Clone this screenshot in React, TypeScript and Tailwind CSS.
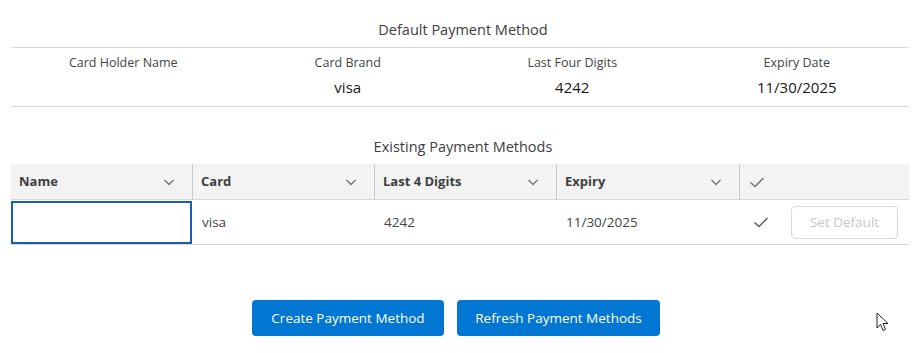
import React from "react";

const Chevron = () => (
  <svg width="14" height="14" viewBox="0 0 14 14" fill="none" stroke="#747474" strokeWidth="1.3">
    <path d="M2.5 5 L7 9.5 L11.5 5" />
  </svg>
);

const Check = ({ color = "#5c5c5c" }: { color?: string }) => (
  <svg width="16" height="14" viewBox="0 0 16 14" fill="none" stroke={color} strokeWidth="1.5">
    <path d="M1.5 7.5 L6 11.5 L14.5 3" />
  </svg>
);

export default function App() {
  const font = { fontFamily: '"Open Sans", "Noto Sans", sans-serif' };
  return (
    <div className="relative w-[923px] h-[353px] bg-white text-[#181818]" style={font}>
      <div className="px-[11px] pt-[20px] w-[920px]">
        <div className="text-center text-[14.5px] text-[#3e3e3e] leading-[20px] pb-[7px] pl-[6px] border-b border-[#d8d8d8]">
          Default Payment Method
        </div>
        <div className="grid grid-cols-4 border-b border-[#d8d8d8] pt-[6px] pb-[8px]">
          {[
            ["Card Holder Name", ""],
            ["Card Brand", "visa"],
            ["Last Four Digits", "4242"],
            ["Expiry Date", "11/30/2025"],
          ].map(([l, v]) => (
            <div key={l} className="flex flex-col items-center">
              <div className="text-[12.5px] leading-[18px] text-[#444]">{l}</div>
              <div className="text-[15px] leading-[22px] text-[#181818] mt-[4px] h-[22px]">{v}</div>
            </div>
          ))}
        </div>
        <div className="text-center text-[14.5px] text-[#3e3e3e] leading-[20px] mt-[30px] mb-[7px] pl-[6px]">
          Existing Payment Methods
        </div>
        <div className="grid grid-cols-[181px_182px_182px_183px_170px]">
          {["Name", "Card", "Last 4 Digits", "Expiry"].map((h, i) => (
            <div
              key={h}
              className={`h-[36px] bg-[#f3f3f3] border-b border-[#d8d8d8] flex items-center justify-between pl-[8px] pr-[16px] ${i > 0 ? "border-l border-l-[#c9c9c9]" : ""}`}
            >
              <span className="text-[13px] font-bold text-[#3e3e3e]">{h}</span>
              <Chevron />
            </div>
          ))}
          <div className="h-[36px] bg-[#f3f3f3] border-b border-[#d8d8d8] border-l border-l-[#c9c9c9] flex items-center pl-[9px]">
            <Check color="#747474" />
          </div>

          <div className="h-[45px] border-b border-[#d8d8d8] flex items-center">
            <div className="w-full h-[43px] border-2 border-[#1b5fb4] mt-[1px]" />
          </div>
          <div className="h-[45px] border-b border-[#d8d8d8] flex items-center pl-[10px] text-[13.5px] text-[#444]">visa</div>
          <div className="h-[45px] border-b border-[#d8d8d8] flex items-center pl-[10px] text-[13.5px] text-[#444]">4242</div>
          <div className="h-[45px] border-b border-[#d8d8d8] flex items-center pl-[10px] text-[13.5px] text-[#444]">11/30/2025</div>
          <div className="h-[45px] border-b border-[#d8d8d8] flex items-center pl-[14px]">
            <Check />
            <button className="ml-[22px] h-[33px] w-[107px] border border-[#dddbda] rounded-[4px] text-[13.5px] text-[#c9c9c9] bg-white">
              Set Default
            </button>
          </div>
        </div>
        <div className="flex justify-center gap-[13px] mt-[55px] pr-[8px]">
          <button className="h-[36px] w-[192px] rounded-[4px] bg-[#0176d3] text-white text-[13.5px]">
            Create Payment Method
          </button>
          <button className="h-[36px] w-[203px] rounded-[4px] bg-[#0176d3] text-white text-[13.5px]">
            Refresh Payment Methods
          </button>
        </div>
      </div>
      <svg className="absolute left-[876px] top-[312px]" width="14" height="20" viewBox="0 0 14 20">
        <path d="M1 1 L1 16 L4.5 12.5 L7 18.5 L9.5 17.5 L7 11.5 L12 11.5 Z" fill="white" stroke="#222" strokeWidth="1" strokeLinejoin="round" />
      </svg>
    </div>
  );
}
